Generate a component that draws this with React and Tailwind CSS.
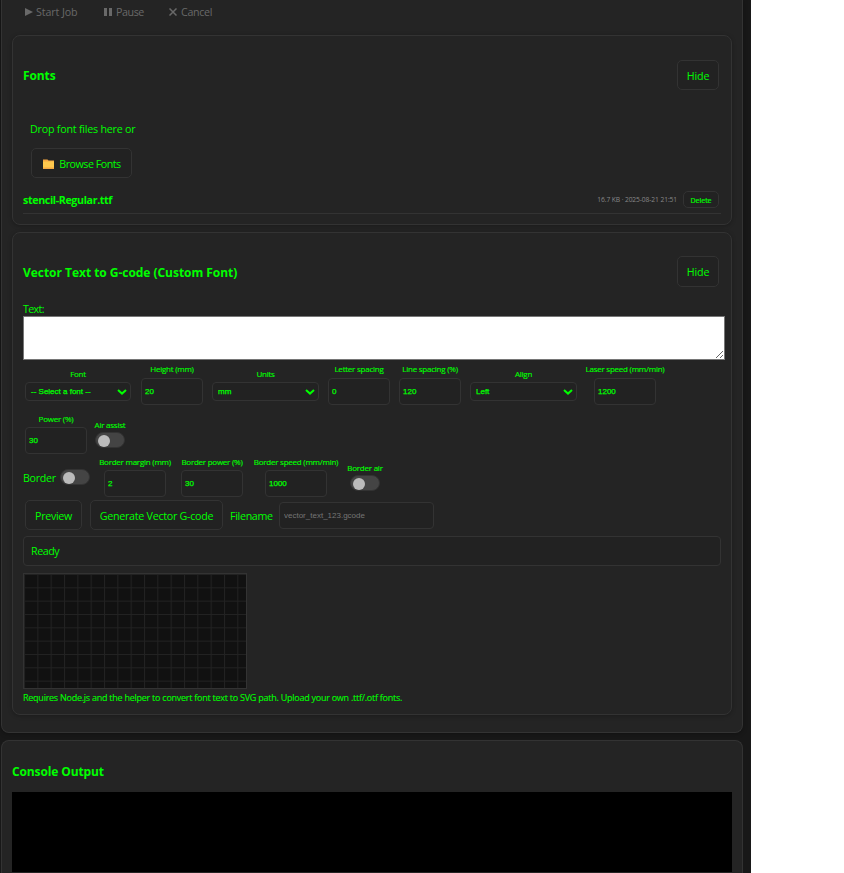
import React from "react";

const UI = "font-['Open_Sans','Noto_Sans',sans-serif]";
const inputBox =
  "block h-[27px] w-[62px] rounded-[4px] border border-[#333] bg-[#222] pl-[3px] font-['Liberation_Sans',Arial,sans-serif] text-[8px] text-[#00ff00] outline-none [-webkit-text-stroke:0.25px_#00ff00]";

function Button({ className = "", children }) {
  return (
    <button
      className={`flex shrink-0 items-center justify-center whitespace-nowrap rounded-[5px] border border-[#333] bg-[#222] pt-px text-[10.7px] ${className}`}
    >
      {children}
    </button>
  );
}

function Label({ children, className = "" }) {
  return (
    <span
      className={`flex h-[10px] items-center justify-center whitespace-nowrap text-[8px] leading-[10px] tracking-[-0.03em] [-webkit-text-stroke:0.15px_#00ff00] ${className}`}
    >
      {children}
    </span>
  );
}

function Field({ label, value, className, gap = "gap-[3px]" }) {
  return (
    <label className={`flex flex-col items-center ${gap} ${className}`}>
      <Label>{label}</Label>
      <input className={inputBox} defaultValue={value} />
    </label>
  );
}

function Select({ label, value, className }) {
  return (
    <label className={`flex flex-col pt-[5px] ${className}`}>
      <Label>{label}</Label>
      <span className="mt-[3px] flex h-[19px] items-center justify-between rounded-[4px] border border-[#333] bg-[#222] pl-[5px] pr-[3px] font-['Liberation_Sans',Arial,sans-serif] text-[8px] [-webkit-text-stroke:0.25px_#00ff00]">
        {value}
        <svg width="10" height="6" viewBox="0 0 10 6" fill="none" stroke="#00ff00" strokeWidth="2">
          <path d="M1 1l4 3.600L9 1" />
        </svg>
      </span>
    </label>
  );
}

function Toggle() {
  return (
    <span className="flex h-4 w-[30px] shrink-0 items-center rounded-full border border-[#333] bg-[#444] pl-[2px]">
      <span className="mt-px size-3 rounded-full bg-[#bbb]" />
    </span>
  );
}

export default function App() {
  return (
    <div className={`${UI} h-[873px] w-[844px] overflow-hidden bg-white text-[10.7px] leading-[14px] text-[#00ff00]`}>
      <div className="h-full w-[751px] bg-[#181818] pl-px">
        <section className="h-[733px] w-[742px] rounded-b-[8px] border border-t-0 border-[#333] bg-[#242424] px-[10px] shadow-[0_1px_5px_rgba(0,0,0,0.3)]">
          <div className="flex h-[25px] items-center pb-[2px] pl-[13px] text-[#696969]">
            <span className="flex w-[79px] items-center gap-[3px] tracking-[-0.01em]">
              <svg width="8" height="8" viewBox="0 0 8 8" fill="currentColor"><path d="M0 0l8 4-8 4z" /></svg>
              Start Job
            </span>
            <span className="flex w-[65px] items-center gap-[4px] tracking-[-0.04em]">
              <svg width="8" height="8" viewBox="0 0 8 8" fill="currentColor"><path d="M0 0h3v8H0zM5 0h3v8H5z" /></svg>
              Pause
            </span>
            <span className="flex items-center gap-[4px] tracking-[-0.03em]">
              <svg width="8" height="8" viewBox="0 0 8 8" fill="none" stroke="currentColor" strokeWidth="1.5"><path d="M.5.5l7 7M7.500.5l-7 7" /></svg>
              Cancel
            </span>
          </div>

          <div className="mt-[10px] h-[190px] w-[720px] rounded-[8px] border border-[#333] bg-[#242424] pl-[10px] shadow-[0_1px_4px_rgba(0,0,0,0.25)]">
            <div className="mt-[24px] flex h-[30px] items-center justify-between pr-[12px]">
              <h3 className="pt-[2px] text-[12px] font-bold tracking-[-0.01em]">Fonts</h3>
              <Button className="h-[30px] w-[42px] tracking-[-0.01em]">Hide</Button>
            </div>
            <div className="mt-[32px] pl-[7px] tracking-[-0.02em]">Drop font files here or</div>
            <Button className="ml-[8px] mt-[12px] h-[30px] w-[101px] gap-[5px] pl-px">
              <svg width="11" height="10" viewBox="0 0 11 10">
                <path d="M0 .5h4.500l1 1H11v8.500H0z" fill="#f5a742" />
                <path d="M0 2.500h11v6H0z" fill="#ffc84d" />
              </svg>
              <span className="tracking-[-0.045em]">Browse Fonts</span>
            </Button>
            <div className="mt-[10px] flex h-[26px] w-[698px] items-start border-b border-[#333] pt-[3px]">
              <span className="mt-[2px] font-bold tracking-[-0.035em]">stencil-Regular.ttf</span>
              <span className="ml-auto mt-[3px] h-3 text-[6.700px] leading-3 tracking-[-0.015em] text-[#888]">16.7 KB · 2025-08-21 21:51</span>
              <button className="ml-[6px] mr-[2px] flex h-[17px] w-[36px] items-center justify-center rounded-[5px] border border-[#333] bg-[#222] pt-[2px] text-[7px] [-webkit-text-stroke:0.2px_#00ff00]">Delete</button>
            </div>
          </div>

          <div className="mt-[7px] h-[483px] w-[720px] rounded-[8px] border border-[#333] bg-[#242424] pl-[10px] shadow-[0_1px_4px_rgba(0,0,0,0.25)]">
            <div className="mt-[23px] flex h-[31px] items-center justify-between pr-[12px]">
              <h3 className="pt-[2px] text-[12px] font-bold tracking-[-0.003em]">Vector Text to G-code (Custom Font)</h3>
              <Button className="h-[31px] w-[42px] tracking-[-0.01em]">Hide</Button>
            </div>
            <div className="mt-[15px] h-[14px] tracking-[-0.06em]">Text:</div>
            <textarea className="block h-[44px] w-[702px] resize rounded-none border border-[#767676] bg-white outline-none" />

            <div className="mt-[4px] flex h-[41px] items-start pl-[2px]">
              <Select label="Font" value="-- Select a font --" className="w-[106px]" />
              <Field gap="gap-[4px]" label="Height (mm)" value="20" className="ml-[10px] w-[62px]" />
              <Select label="Units" value="mm" className="ml-[9px] w-[107px]" />
              <Field gap="gap-[4px]" label="Letter spacing" value="0" className="ml-[9px] w-[62px]" />
              <Field gap="gap-[4px]" label="Line spacing (%)" value="120" className="ml-[9px] w-[62px]" />
              <Select label="Align" value="Left" className="ml-[9px] w-[107px]" />
              <Field gap="gap-[4px]" label="Laser speed (mm/min)" value="1200" className="ml-[17px] w-[62px]" />
            </div>

            <div className="mt-[9px] flex h-[40px] items-start pl-[2px]">
              <Field label="Power (%)" value="30" className="w-[62px]" />
              <div className="ml-[8px] flex w-[30px] flex-col pt-[6px]">
                <Label>Air assist</Label>
                <span className="mt-[2px]"><Toggle /></span>
              </div>
            </div>

            <div className="mt-[3px] flex h-[40px] items-start">
              <span className="w-[37px] pt-[14px] tracking-[-0.03em]">Border</span>
              <span className="pt-[12px]"><Toggle /></span>
              <Field label="Border margin (mm)" value="2" className="ml-[14px] w-[62px]" />
              <Field label="Border power (%)" value="30" className="ml-[15px] w-[62px]" />
              <Field label="Border speed (mm/min)" value="1000" className="ml-[22px] w-[62px]" />
              <div className="ml-[23px] flex w-[30px] flex-col pt-[6px]">
                <Label>Border air</Label>
                <span className="mt-[2px]"><Toggle /></span>
              </div>
            </div>

            <div className="mt-[3px] flex h-[30px] items-center pl-[2px]">
              <Button className="h-[30px] w-[57px] pt-[2px] tracking-[-0.03em]">Preview</Button>
              <Button className="ml-[8px] h-[30px] w-[133px] pt-[2px] tracking-[-0.025em]">Generate Vector G-code</Button>
              <span className="ml-[7px] w-[49px] pt-[2px] tracking-[-0.03em]">Filename</span>
              <input
                placeholder="vector_text_123.gcode"
                className="h-[27px] w-[155px] rounded-[4px] border border-[#333] bg-[#222] pl-[4px] font-['Liberation_Sans',Arial,sans-serif] text-[8px] placeholder:text-[#757575] outline-none"
              />
            </div>

            <div className="mt-[6px] flex h-[30px] w-[698px] items-center rounded-[4px] border border-[#333] bg-[#222] pl-[7px] tracking-[-0.04em]">Ready</div>
            <div className="mt-[7px] h-[116px] w-[224px] border border-[#333] bg-[#111]">
              <svg width="222" height="114">
                <defs>
                  <pattern id="grid" width="13.333" height="13.333" patternUnits="userSpaceOnUse">
                    <path d="M.5 0v13.333M0 .5h13.333" stroke="#222" fill="none" />
                  </pattern>
                </defs>
                <rect width="222" height="114" fill="url(#grid)" />
              </svg>
            </div>
            <div className="mt-[2px] whitespace-nowrap text-[9px] tracking-[-0.028em] [-webkit-text-stroke:0.1px_#00ff00]">
              Requires Node.js and the helper to convert font text to SVG path. Upload your own .ttf/.otf fonts.
            </div>
          </div>
        </section>

        <section className="mt-[7px] h-[133px] w-[742px] rounded-t-[8px] border border-b-0 border-[#333] bg-[#242424] px-[10px]">
          <h3 className="pt-[24px] text-[12px] font-bold leading-[14px] tracking-[-0.01em]">Console Output</h3>
          <div className="mt-[13px] h-[80px] w-[720px] bg-black" />
        </section>
      </div>
    </div>
  );
}
